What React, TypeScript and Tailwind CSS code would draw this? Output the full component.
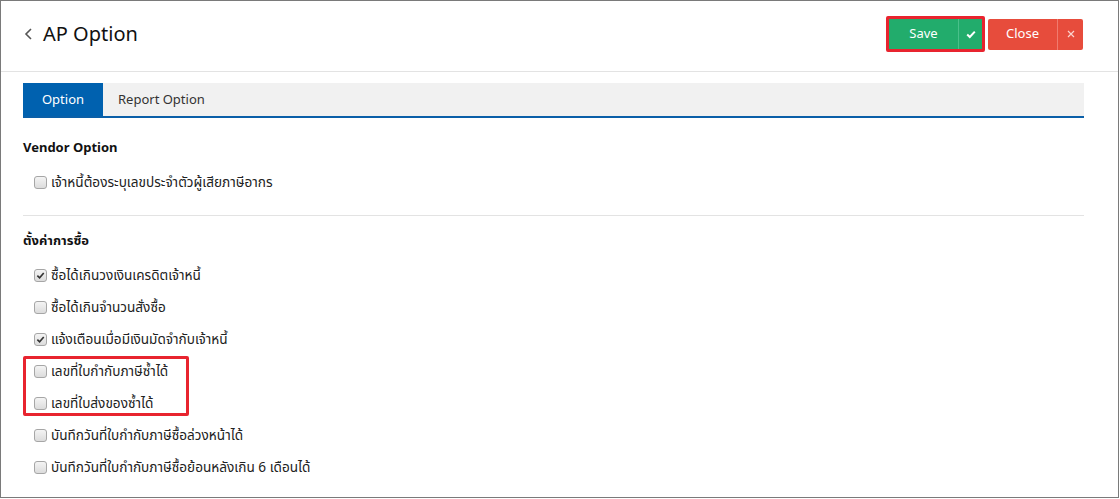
import React from "react";

const font = { fontFamily: '"Segoe UI", "Noto Sans", "Noto Sans Thai", Tahoma, sans-serif' };

function Box({ checked }: { checked?: boolean }) {
  return (
    <span className="inline-flex h-[13px] w-[13px] shrink-0 items-center justify-center rounded-[3px] border border-[#a6a6a6] bg-gradient-to-b from-[#f4f4f4] to-[#dcdcdc]">
      {checked && (
        <svg width="9" height="9" viewBox="0 0 10 10">
          <path d="M1.5 5.2 L4 7.6 L8.6 2.2" fill="none" stroke="#333" strokeWidth="1.8" />
        </svg>
      )}
    </span>
  );
}

function Item({ label, checked }: { label: string; checked?: boolean }) {
  return (
    <div className="flex h-[32px] items-center gap-[4px] pl-[11px] text-[13.6px] text-[#222]">
      <Box checked={checked} />
      <span>{label}</span>
    </div>
  );
}

export default function App() {
  return (
    <div style={font} className="h-[499px] w-[1120px] overflow-hidden bg-white">
      <div className="flex h-[498px] w-[1119px] flex-col border border-[#7a7a7a]">
        <div className="flex h-[71px] shrink-0 items-center justify-between border-b border-[#e3e3e3] pb-[4px] pl-[22px] pr-[35px]">
          <div className="flex items-center gap-[8px]">
            <svg width="12" height="14" viewBox="0 0 12 14">
              <path d="M8 2 L3 7 L8 12" fill="none" stroke="#555" strokeWidth="1.6" />
            </svg>
            <span className="text-[20px] text-[#111]">AP Option</span>
          </div>
          <div className="flex items-center gap-[3px]">
            <div className="rounded-[2px] border-[3px] border-[#e8242f] p-0">
              <div className="flex h-[30px]">
                <div className="flex w-[69px] items-center justify-center bg-[#22ac6c] text-[13px] text-white">Save</div>
                <div className="flex w-[24px] items-center justify-center border-l border-[#49c08a] bg-[#22ac6c]">
                  <svg width="10" height="9" viewBox="0 0 10 9">
                    <path d="M1.2 4.6 L3.8 7 L8.8 1.6" fill="none" stroke="#fff" strokeWidth="2" />
                  </svg>
                </div>
              </div>
            </div>
            <div className="flex h-[31px]">
              <div className="flex w-[69px] items-center justify-center rounded-l-[2px] bg-[#e74c3c] text-[13px] text-white">Close</div>
              <div className="flex w-[26px] items-center justify-center rounded-r-[2px] border-l border-[#f07b6f] bg-[#e74c3c]">
                <svg width="8" height="8" viewBox="0 0 8 8">
                  <path d="M1 1 L7 7 M7 1 L1 7" stroke="#fbd3ce" strokeWidth="1.2" />
                </svg>
              </div>
            </div>
          </div>
        </div>
        <div className="flex flex-col px-[22px] pt-[11px]">
          <div className="flex h-[35px] w-[1061px] border-b-2 border-[#0a5fa8] bg-[#f1f1f1] text-[13px]">
            <div className="flex w-[80px] items-center justify-center bg-[#0061af] text-white">Option</div>
            <div className="flex items-center px-[15px] text-[#333]">Report Option</div>
          </div>
          <div className="pt-[20px] text-[13px] font-bold text-[#111]">Vendor Option</div>
          <div className="pt-[9px]">
            <Item label="เจ้าหนี้ต้องระบุเลขประจำตัวผู้เสียภาษีอากร" />
          </div>
          <div className="mt-[16px] w-[1061px] border-t border-[#e3e3e3]" />
          <div className="pt-[15px] text-[13px] font-bold text-[#111]">ตั้งค่าการซื้อ</div>
          <div className="pt-[9px]">
            <Item label="ซื้อได้เกินวงเงินเครดิตเจ้าหนี้" checked />
            <Item label="ซื้อได้เกินจำนวนสั่งซื้อ" />
            <Item label="แจ้งเตือนเมื่อมีเงินมัดจำกับเจ้าหนี้" checked />
            <div className="relative">
              <Item label="เลขที่ใบกำกับภาษีซ้ำได้" />
              <Item label="เลขที่ใบส่งของซ้ำได้" />
              <div className="pointer-events-none absolute bottom-[3px] left-0 top-[1px] w-[166px] rounded-[2px] border-[3px] border-[#e8242f]" />
            </div>
            <Item label="บันทึกวันที่ใบกำกับภาษีซื้อล่วงหน้าได้" />
            <Item label="บันทึกวันที่ใบกำกับภาษีซื้อย้อนหลังเกิน 6 เดือนได้" />
          </div>
        </div>
      </div>
    </div>
  );
}
